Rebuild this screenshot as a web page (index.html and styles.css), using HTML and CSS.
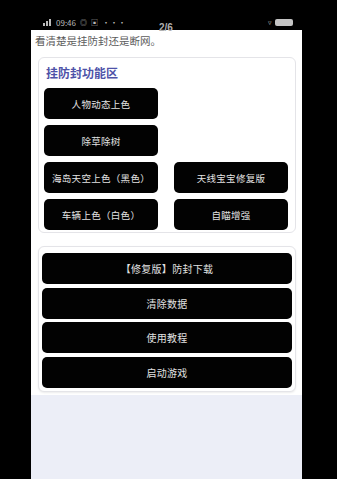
FILE: index.html
```html
<!DOCTYPE html>
<html lang="zh">
<head>
<meta charset="utf-8">
<link rel="stylesheet" href="styles.css">
</head>
<body>
<div class="frame">
  <div class="status">
    <div class="status-left">
      <svg class="sig" width="9" height="7" viewBox="0 0 9 7"><rect x="0" y="4" width="2" height="3" fill="#bbb"/><rect x="3" y="2" width="2" height="5" fill="#bbb"/><rect x="6" y="0" width="2" height="7" fill="#bbb"/></svg>
      <span>09:46</span>
      <span class="ico">◎</span>
      <span class="ico">▣</span>
      <span>···</span>
    </div>
    <div class="status-right">
      <span class="ico">▿</span>
      <span class="batt"></span>
    </div>
  </div>
  <div class="pager">2/6</div>
  <div class="screen">
    <div class="sheet">
      <div class="notice">看清楚是挂防封还是断网。</div>
      <div class="card card-func">
        <div class="card-title">挂防封功能区</div>
        <div class="grid">
          <div class="btn">人物动态上色</div>
          <div></div>
          <div class="btn">除草除树</div>
          <div></div>
          <div class="btn">海岛天空上色（黑色）</div>
          <div class="btn">天线宝宝修复版</div>
          <div class="btn">车辆上色（白色）</div>
          <div class="btn">自瞄增强</div>
        </div>
      </div>
      <div class="card card-actions">
        <div class="btn wide">【修复版】防封下载</div>
        <div class="btn wide">清除数据</div>
        <div class="btn wide">使用教程</div>
        <div class="btn wide">启动游戏</div>
      </div>
    </div>
  </div>
</div>
</body>
</html>
```

FILE: styles.css
```css
* { box-sizing: border-box; }
html, body {
  margin: 0;
  padding: 0;
  background: #000;
}
body {
  width: 337px;
  height: 479px;
  overflow: hidden;
  font-family: "Noto Sans CJK SC", "Noto Sans", sans-serif;
}
.frame {
  position: relative;
  width: 337px;
  height: 479px;
}
.status {
  height: 30px;
  display: flex;
  justify-content: space-between;
  align-items: flex-end;
  padding: 0 44px 3px 43px;
  color: #b8b8b8;
  font-size: 8px;
  line-height: 9px;
}
.status-left, .status-right {
  display: flex;
  align-items: center;
  gap: 4px;
}
.status-right { gap: 3px; }
.ico { font-size: 7px; }
.batt {
  display: inline-block;
  width: 18px;
  height: 7px;
  background: #c4c4c4;
  border-radius: 2px;
}
.pager {
  position: absolute;
  left: 159px;
  top: 22px;
  font-size: 10px;
  line-height: 12px;
  color: #b0b0b0;
  font-family: "Liberation Sans", sans-serif;
  font-weight: bold;
}
.screen {
  margin-left: 31px;
  width: 271px;
  height: 449px;
  background: #eceef7;
}
.sheet {
  background: #fff;
  padding-bottom: 3px;
}
.notice {
  height: 22px;
  line-height: 22px;
  padding-left: 4px;
  font-size: 10.5px;
  color: #5c5c5c;
}
.card {
  margin: 5px 6px 0 7px;
  border: 1px solid #e4e4e8;
  border-radius: 6px;
  background: #fff;
}
.card-func {
  padding: 8px 0 2px 5px;
}
.card-title {
  font-size: 12px;
  line-height: 14px;
  font-weight: bold;
  color: #4e52a8;
  padding-left: 2px;
  margin-bottom: 8px;
}
.grid {
  display: grid;
  grid-template-columns: 114px 114px;
  column-gap: 16px;
  row-gap: 6px;
}
.btn {
  height: 31px;
  background: #020202;
  color: #e2e2e2;
  border-radius: 5px;
  display: flex;
  align-items: center;
  justify-content: center;
  font-size: 9.5px;
  letter-spacing: 0.3px;
}
.card-actions {
  margin-top: 13px;
  padding: 6px 3px 3px 3px;
  display: flex;
  flex-direction: column;
  gap: 3.5px;
  box-shadow: 0 1px 2px rgba(0,0,0,0.08);
}
.btn.wide {
  font-size: 10px;
}
```
